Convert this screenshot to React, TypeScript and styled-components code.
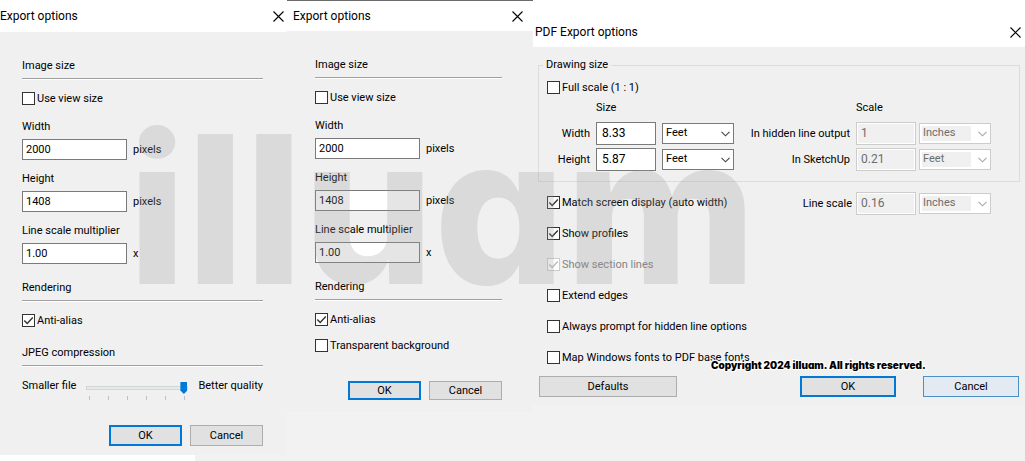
import React, { useId } from "react";
import styled, { createGlobalStyle, css } from "styled-components";

const GlobalStyle = createGlobalStyle`
  *, *::before, *::after { box-sizing: border-box; }
  body { margin: 0; background: #f2f2f2; }
  body, input, select, button {
    font-family: Roboto, "Open Sans", sans-serif;
    font-size: 11px;
    line-height: 16px;
    color: #000;
  }
`;

const Page = styled.main`
  position: relative;
  display: grid;
  grid-template-columns: 287fr 246fr 492fr;
  min-height: 100vh;
  overflow: hidden;
`;

const Column = styled.div`
  display: flex;
  flex-direction: column;
  min-width: 0;
`;

const Strip = styled.div`
  flex: 1;
  width: 68%;
  background: #fff;
`;

const Dialog = styled.section<{ $framed?: boolean }>`
  background: #f0f0f0;
  ${(p) => p.$framed && css`border-top: 1px solid #6a6a6a;`}
`;

const TitleBar = styled.header<{ $pad: string }>`
  display: flex;
  align-items: center;
  justify-content: space-between;
  padding: ${(p) => p.$pad};
  background: #fff;
`;

const Title = styled.h2`
  margin: 0;
  font-weight: 400;
  font-size: 12px;
  line-height: 16px;
`;

const CloseButton = styled.button`
  display: flex;
  padding: 0;
  border: 0;
  background: none;
`;

const Body = styled.div<{ $pad: string }>`
  padding: ${(p) => p.$pad};
`;

const SectionHead = styled.h3<{ $top?: number }>`
  margin: ${(p) => p.$top ?? 16}px 0 12px;
  padding-bottom: 4px;
  border-bottom: 1px solid #a0a0a0;
  box-shadow: 0 1px #fff;
  font-size: 11px;
  font-weight: 400;
  line-height: 16px;
`;

const FieldStack = styled.div`
  display: flex;
  flex-direction: column;
  gap: 11px;
  margin-top: 12px;
`;

const FieldLabel = styled.label`
  display: block;
  margin-bottom: 4px;
`;

const Inline = styled.div<{ $gap: number }>`
  display: flex;
  align-items: center;
  gap: ${(p) => p.$gap}px;
`;

const TextInput = styled.input<{ $small?: boolean }>`
  width: ${(p) => (p.$small ? 60 : 105)}px;
  height: ${(p) => (p.$small ? 23 : 21)}px;
  padding: ${(p) => (p.$small ? "0 5px 2px" : "0 3px 1px")};
  border: 1px solid #7a7a7a;
  border-radius: 0;
  background: #fff;
  outline: 0;
  ${(p) => p.$small && css`font-size: 12px;`}
  &:disabled {
    padding-left: 4px;
    border-color: #ccc;
    background: #f0f0f0;
    box-shadow: inset 0 0 0 1px #fff;
    color: #6d6d6d;
  }
`;

const CheckLabel = styled.label<{ $off?: boolean }>`
  display: flex;
  align-items: center;
  gap: 2px;
  height: 16px;
  color: ${(p) => (p.$off ? "#838383" : "#000")};
  white-space: nowrap;
`;

const CheckBox = styled.span`
  display: grid;
  width: 13px;
  height: 13px;
  margin-bottom: 1px;
  > * { grid-area: 1 / 1; }
  svg { pointer-events: none; }
  input {
    appearance: none;
    width: 13px;
    height: 13px;
    margin: 0;
    border: 1px solid #333;
    background: #fff;
  }
  input:disabled { border-color: #ccc; }
`;

const SelectBox = styled.span`
  display: grid;
  align-items: center;
  width: 72px;
  height: 21px;
  > * { grid-area: 1 / 1; }
  svg { justify-self: end; margin-right: 4px; pointer-events: none; }
  select {
    appearance: none;
    width: 100%;
    height: 21px;
    padding: 0 18px 1px 3px;
    border: 1px solid #7a7a7a;
    border-radius: 0;
    background: #fff;
  }
  select:disabled {
    border-color: #ccc;
    background: linear-gradient(#f0f0f0, #f0f0f0) 2px 2px / 49px 15px no-repeat #fff;
    color: #6d6d6d;
    opacity: 1;
  }
`;

const PushButton = styled.button<{ $kind?: "default" | "hover"; $width: number; $height?: number }>`
  width: ${(p) => p.$width}px;
  height: ${(p) => p.$height ?? 21}px;
  padding: 0;
  border: 1px solid #adadad;
  background: #e1e1e1;
  line-height: 16px;
  ${(p) => p.$kind === "default" && css`border: 2px solid #0078d7;`}
  ${(p) => p.$kind === "hover" && css`border-color: #4a90c8; background: #e3eaf1;`}
`;

const Actions = styled.div<{ $top: number }>`
  display: flex;
  justify-content: flex-end;
  gap: 8px;
  margin-top: ${(p) => p.$top}px;
`;

const CheckStack = styled.div<{ $gap: number }>`
  display: flex;
  flex-direction: column;
  gap: ${(p) => p.$gap}px;
`;

const SliderRow = styled.div`
  display: flex;
  justify-content: space-between;
  white-space: nowrap;
`;

const SliderBox = styled.div`
  width: 102px;
  padding-top: 2px;
`;

const Slider = styled.input`
  appearance: none;
  display: block;
  width: 100%;
  height: 16px;
  margin: 0;
  background: none;
  &::-webkit-slider-runnable-track {
    height: 4px;
    border: 1px solid #d2d6d6;
    background: #e7eaea;
  }
  &::-webkit-slider-thumb {
    appearance: none;
    width: 7px;
    height: 12px;
    margin-top: -5px;
    background: #0078d7;
    clip-path: polygon(0 0, 100% 0, 100% 70%, 50% 100%, 0 70%);
  }
`;

const Ticks = styled.div`
  display: flex;
  justify-content: space-between;
  padding: 0 3px;
  i { width: 1px; height: 4px; background: #c0c0c0; }
`;

const Group = styled.fieldset`
  min-width: 0;
  margin: 0 5px;
  padding: 7px 28px 10px 8px;
  border: 1px solid #dcdcdc;
  legend { margin-left: -4px; padding: 0 3px; }
`;

const SizeGrid = styled.div`
  display: grid;
  grid-template-columns: 43px 138px 1fr 135px;
  column-gap: 6px;
  row-gap: 3px;
  align-items: center;
  margin-top: 4px;
`;

const Heading = styled.span<{ $col: number }>`
  grid-column: ${(p) => p.$col};
  margin-bottom: 3px;
`;

const RightLabel = styled.label`
  text-align: right;
  white-space: nowrap;
`;

const Options = styled.div`
  display: flex;
  justify-content: space-between;
  align-items: flex-start;
  padding: 10px 34px 0 14px;
`;

const OptionList = styled(CheckStack)`
  padding-top: 3px;
`;

const Footer = styled.footer`
  display: flex;
  gap: 27px;
  padding: 10px 6px 8px;
  > :first-child { margin-right: auto; }
`;

const Watermark = styled.div`
  position: absolute;
  left: 128px;
  top: 80px;
  font-family: Inter, sans-serif;
  font-feature-settings: "cv11";
  font-weight: 800;
  font-size: 206px;
  line-height: 258px;
  color: rgba(155, 155, 155, 0.26);
  white-space: nowrap;
  pointer-events: none;
`;

const Copyright = styled.div`
  position: absolute;
  left: 711px;
  top: 357px;
  font-family: Inter, sans-serif;
  font-feature-settings: "cv11";
  font-weight: 900;
  font-size: 10px;
  line-height: 16px;
  white-space: nowrap;
  text-shadow: 1px 0 #fff, -1px 0 #fff, 0 1px #fff, 0 -1px #fff, 1px 1px #fff,
    -1px -1px #fff, 1px -1px #fff, -1px 1px #fff, 0 0 3px #fff;
  pointer-events: none;
`;

function Close() {
  return (
    <CloseButton type="button" aria-label="Close">
      <svg width="11" height="11" viewBox="0 0 11 11" fill="none" stroke="#000" strokeWidth="1.1">
        <path d="M.5.5l10 10M10.5.5l-10 10" />
      </svg>
    </CloseButton>
  );
}

function Check({ label, checked, disabled }: { label: string; checked?: boolean; disabled?: boolean }) {
  return (
    <CheckLabel $off={disabled}>
      <CheckBox>
        <input type="checkbox" defaultChecked={checked} disabled={disabled} />
        {checked && (
          <svg width="13" height="13" viewBox="0 0 13 13" fill="none" stroke={disabled ? "#bcbcbc" : "#333"} strokeWidth="1.4">
            <path d="M2.3 6.5l2.9 2.9 5.6-6" />
          </svg>
        )}
      </CheckBox>
      {label}
    </CheckLabel>
  );
}

function NumberField({ label, value, unit }: { label: string; value: string; unit: string }) {
  const id = useId();
  return (
    <div>
      <FieldLabel htmlFor={id}>{label}</FieldLabel>
      <Inline $gap={6}>
        <TextInput id={id} defaultValue={value} />
        <span>{unit}</span>
      </Inline>
    </div>
  );
}

function Measure({ id, label, value, unit, disabled }: { id: string; label: string; value: string; unit: string; disabled?: boolean }) {
  return (
    <Inline $gap={disabled ? 3 : 6}>
      <TextInput $small id={id} defaultValue={value} disabled={disabled} />
      <SelectBox>
        <select defaultValue={unit} disabled={disabled} aria-label={`${label} unit`}>
          <option>Inches</option>
          <option>Feet</option>
        </select>
        <svg width="9" height="6" viewBox="0 0 9 6" fill="none" stroke={disabled ? "#a8a8a8" : "#444"} strokeWidth="1.1">
          <path d="M.5.8l4 4 4-4" />
        </svg>
      </SelectBox>
    </Inline>
  );
}

function ImageSize() {
  return (
    <>
      <SectionHead $top={0}>Image size</SectionHead>
      <Check label="Use view size" />
      <FieldStack>
        <NumberField label="Width" value="2000" unit="pixels" />
        <NumberField label="Height" value="1408" unit="pixels" />
        <NumberField label="Line scale multiplier" value="1.00" unit="x" />
      </FieldStack>
      <SectionHead>Rendering</SectionHead>
    </>
  );
}

export default function App() {
  return (
    <>
      <GlobalStyle />
      <Page>
        <Column>
          <Dialog>
            <TitleBar $pad="8px 3px 8px 0">
              <Title>Export options</Title>
              <Close />
            </TitleBar>
            <Body $pad="26px 24px 9px 22px">
              <ImageSize />
              <Check label="Anti-alias" checked />
              <SectionHead>JPEG compression</SectionHead>
              <SliderRow>
                <label htmlFor="quality">Smaller file</label>
                <SliderBox>
                  <Slider id="quality" type="range" min={0} max={5} defaultValue={5} />
                  <Ticks>
                    <i /><i /><i /><i /><i /><i />
                  </Ticks>
                </SliderBox>
                <span>Better quality</span>
              </SliderRow>
              <Actions $top={25}>
                <PushButton $kind="default" $width={73}>OK</PushButton>
                <PushButton $width={73}>Cancel</PushButton>
              </Actions>
            </Body>
          </Dialog>
          <Strip />
        </Column>

        <Column>
          <Dialog $framed>
            <TitleBar $pad="7px 10px 7px 6px">
              <Title>Export options</Title>
              <Close />
            </TitleBar>
            <Body $pad="26px 31px 12px 28px">
              <ImageSize />
              <CheckStack $gap={10}>
                <Check label="Anti-alias" checked />
                <Check label="Transparent background" />
              </CheckStack>
              <Actions $top={27}>
                <PushButton $kind="default" $width={73} $height={19}>OK</PushButton>
                <PushButton $width={73} $height={19}>Cancel</PushButton>
              </Actions>
            </Body>
          </Dialog>
        </Column>

        <Column>
          <Dialog>
            <TitleBar $pad="24px 4px 7px 2px">
              <Title>PDF Export options</Title>
              <Close />
            </TitleBar>
            <Body $pad="10px 0 0">
              <Group>
                <legend>Drawing size</legend>
                <Check label="Full scale (1 : 1)" />
                <SizeGrid>
                  <Heading $col={2}>Size</Heading>
                  <Heading $col={4}>Scale</Heading>
                  <RightLabel htmlFor="width">Width</RightLabel>
                  <Measure id="width" label="Width" value="8.33" unit="Feet" />
                  <RightLabel htmlFor="hidden">In hidden line output</RightLabel>
                  <Measure id="hidden" label="In hidden line output" value="1" unit="Inches" disabled />
                  <RightLabel htmlFor="height">Height</RightLabel>
                  <Measure id="height" label="Height" value="5.87" unit="Feet" />
                  <RightLabel htmlFor="model">In SketchUp</RightLabel>
                  <Measure id="model" label="In SketchUp" value="0.21" unit="Feet" disabled />
                </SizeGrid>
              </Group>
              <Options>
                <OptionList $gap={15}>
                  <Check label="Match screen display (auto width)" checked />
                  <Check label="Show profiles" checked />
                  <Check label="Show section lines" checked disabled />
                  <Check label="Extend edges" />
                  <Check label="Always prompt for hidden line options" />
                  <Check label="Map Windows fonts to PDF base fonts" />
                </OptionList>
                <Inline $gap={4}>
                  <label htmlFor="line">Line scale</label>
                  <Measure id="line" label="Line scale" value="0.16" unit="Inches" disabled />
                </Inline>
              </Options>
              <Footer>
                <PushButton $width={138}>Defaults</PushButton>
                <PushButton $kind="default" $width={96}>OK</PushButton>
                <PushButton $kind="hover" $width={96}>Cancel</PushButton>
              </Footer>
            </Body>
          </Dialog>
        </Column>

        <Watermark>illuam</Watermark>
        <Copyright>Copyright 2024 illuam. All rights reserved.</Copyright>
      </Page>
    </>
  );
}
